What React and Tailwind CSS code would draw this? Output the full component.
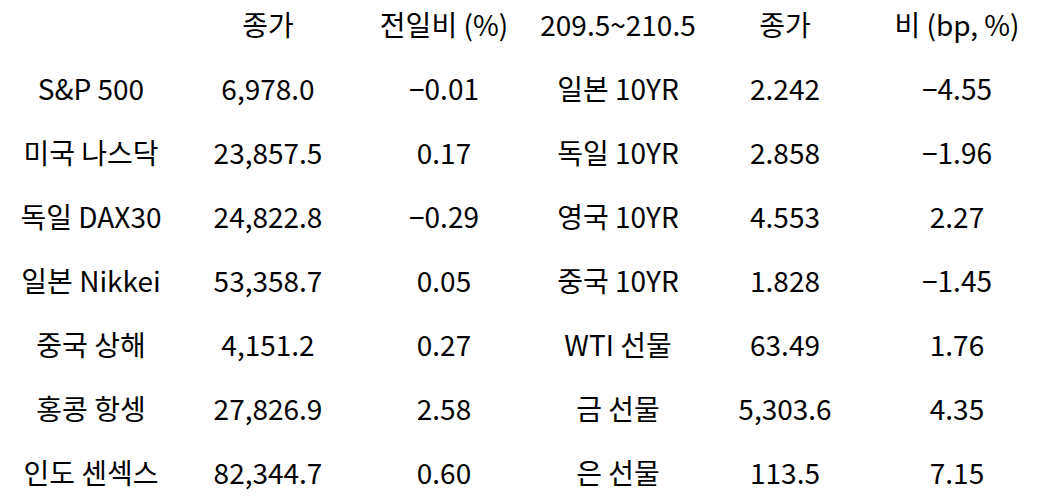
import React from "react";

const header = ["", "종가", "전일비 (%)", "209.5~210.5", "종가", "비 (bp, %)"];

const rows = [
  ["S&P 500", "6,978.0", "−0.01", "일본 10YR", "2.242", "−4.55"],
  ["미국 나스닥", "23,857.5", "0.17", "독일 10YR", "2.858", "−1.96"],
  ["독일 DAX30", "24,822.8", "−0.29", "영국 10YR", "4.553", "2.27"],
  ["일본 Nikkei", "53,358.7", "0.05", "중국 10YR", "1.828", "−1.45"],
  ["중국 상해", "4,151.2", "0.27", "WTI 선물", "63.49", "1.76"],
  ["홍콩 항셍", "27,826.9", "2.58", "금 선물", "5,303.6", "4.35"],
  ["인도 센섹스", "82,344.7", "0.60", "은 선물", "113.5", "7.15"],
];

const Row = ({ cells }) => (
  <div className="grid grid-cols-[182px_172px_180px_168px_166px_178px] h-[64px] items-center">
    {cells.map((c, i) => (
      <div key={i} className="text-center whitespace-nowrap">
        {c}
      </div>
    ))}
  </div>
);

export default function App() {
  return (
    <div
      className="w-[1052px] h-[500px] overflow-hidden bg-white text-black text-[28px] leading-none"
      style={{ fontFamily: '"Noto Sans CJK KR", "Noto Sans", sans-serif' }}
    >
      <div className="-mt-[8px]">
        <Row cells={header} />
        {rows.map((r, i) => (
          <Row key={i} cells={r} />
        ))}
      </div>
    </div>
  );
}
